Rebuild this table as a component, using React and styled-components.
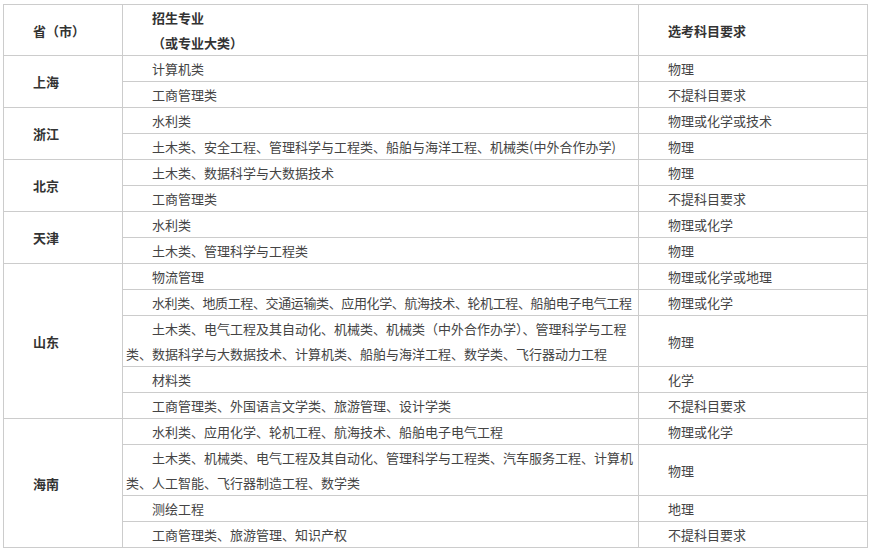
import React from "react"
import styled, { createGlobalStyle } from "styled-components"

const GlobalStyle = createGlobalStyle`
  html, body {
    margin: 0;
    padding: 0;
    background: #fff;
  }
  body {
    font-family: "Noto Sans CJK SC", "Microsoft YaHei", sans-serif;
    font-size: 13px;
    color: #444;
  }
`

const Page = styled.div`
  padding: 4px 0 0 3px;
`

const Table = styled.table`
  width: 864px;
  border-collapse: collapse;
  table-layout: fixed;
  font-size: 13px;
  line-height: 25px;
`

const Cell = styled.td`
  border: 1px solid #ccc;
  padding: 0 3px;
  text-indent: 2em;
  vertical-align: middle;
  font-weight: ${props => (props.$bold ? "bold" : "normal")};
  color: ${props => (props.$bold ? "#333" : "#444")};
  letter-spacing: ${props => (props.$tight ? "-0.38px" : "normal")};
`

const Line = styled.p`
  margin: 0;
`

const groups = [
  {
    province: "上海",
    rows: [
      ["计算机类", "物理"],
      ["工商管理类", "不提科目要求"],
    ],
  },
  {
    province: "浙江",
    rows: [
      ["水利类", "物理或化学或技术"],
      ["土木类、安全工程、管理科学与工程类、船舶与海洋工程、机械类(中外合作办学)", "物理"],
    ],
  },
  {
    province: "北京",
    rows: [
      ["土木类、数据科学与大数据技术", "物理"],
      ["工商管理类", "不提科目要求"],
    ],
  },
  {
    province: "天津",
    rows: [
      ["水利类", "物理或化学"],
      ["土木类、管理科学与工程类", "物理"],
    ],
  },
  {
    province: "山东",
    rows: [
      ["物流管理", "物理或化学或地理"],
      ["水利类、地质工程、交通运输类、应用化学、航海技术、轮机工程、船舶电子电气工程", "物理或化学", true],
      ["土木类、电气工程及其自动化、机械类、机械类（中外合作办学）、管理科学与工程类、数据科学与大数据技术、计算机类、船舶与海洋工程、数学类、飞行器动力工程", "物理"],
      ["材料类", "化学"],
      ["工商管理类、外国语言文学类、旅游管理、设计学类", "不提科目要求"],
    ],
  },
  {
    province: "海南",
    rows: [
      ["水利类、应用化学、轮机工程、航海技术、船舶电子电气工程", "物理或化学"],
      ["土木类、机械类、电气工程及其自动化、管理科学与工程类、汽车服务工程、计算机类、人工智能、飞行器制造工程、数学类", "物理"],
      ["测绘工程", "地理"],
      ["工商管理类、旅游管理、知识产权", "不提科目要求"],
    ],
  },
]

const App = () => {
  return (
    <Page>
      <GlobalStyle />
      <Table>
        <colgroup>
          <col style={{ width: 119 }} />
          <col style={{ width: 516 }} />
          <col style={{ width: 229 }} />
        </colgroup>
        <tbody>
          <tr>
            <Cell $bold>省（市）</Cell>
            <Cell $bold>
              <Line>招生专业</Line>
              <Line>（或专业大类）</Line>
            </Cell>
            <Cell $bold>选考科目要求</Cell>
          </tr>
          {groups.map(group =>
            group.rows.map(([major, subject, tight], i) => (
              <tr key={group.province + i}>
                {i === 0 && (
                  <Cell $bold rowSpan={group.rows.length}>
                    {group.province}
                  </Cell>
                )}
                <Cell $tight={tight}>{major}</Cell>
                <Cell>{subject}</Cell>
              </tr>
            ))
          )}
        </tbody>
      </Table>
    </Page>
  )
}

export default App
